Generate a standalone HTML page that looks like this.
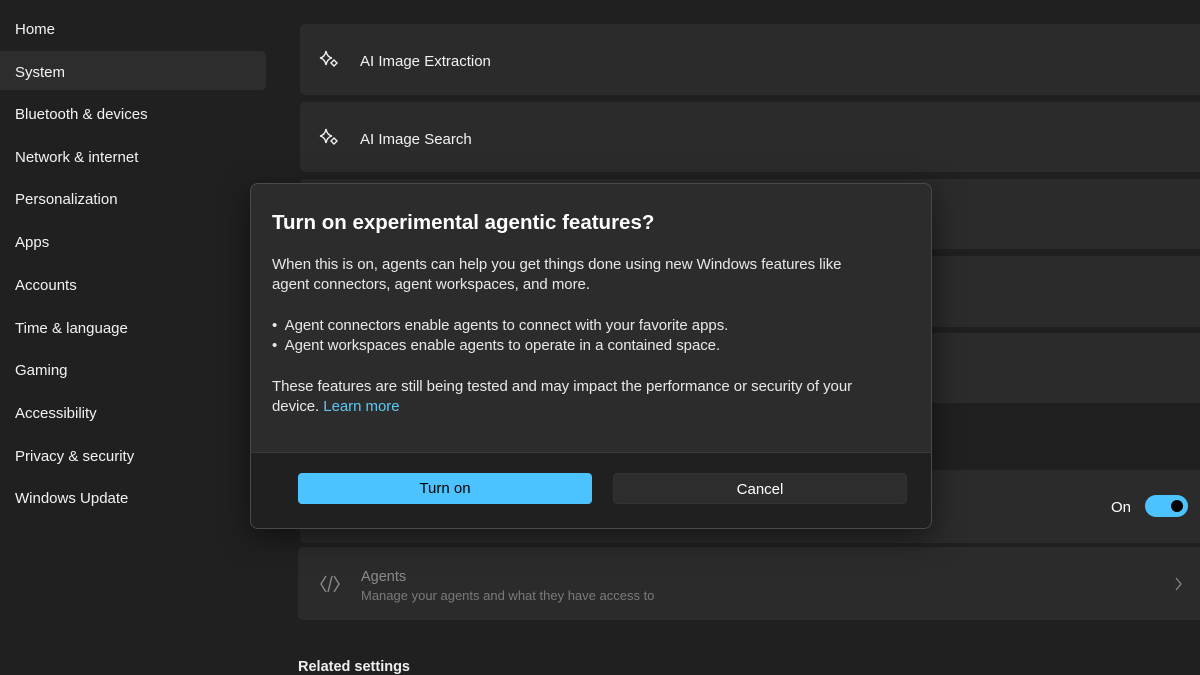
<!DOCTYPE html>
<html><head><style>
*{margin:0;padding:0;box-sizing:border-box}
body{width:1200px;height:675px;background:#202020;font-family:"Liberation Sans",sans-serif;color:#fff;position:relative;overflow:hidden}
.nav{position:absolute;left:15px;font-size:15px;color:#f2f2f2}
.sel{position:absolute;left:0;top:51px;width:266px;height:39px;background:#2d2d2d;border-radius:0 5px 5px 0}
.card{position:absolute;left:300px;width:900px;background:#2b2b2b;border-radius:5px 0 0 5px}
.ct{position:absolute;left:60px;font-size:15px;color:#f2f2f2}
.dlg{position:absolute;left:250px;top:183px;width:682px;height:346px;background:#2c2c2c;border:1px solid #4a4a4a;border-radius:8px;overflow:hidden;box-shadow:0 8px 30px rgba(0,0,0,.5)}
.foot{position:absolute;left:0;top:268px;width:100%;height:78px;background:#202020;border-top:1px solid #3a3a3a}
.p{position:absolute;left:21px;font-size:15px;color:#e8e8e8;line-height:20px;letter-spacing:-0.05px}
.btn{position:absolute;top:20px;height:31px;width:294px;border-radius:4px;font-size:15px;text-align:center;line-height:31px}
</style></head><body>
<div class="sel"></div>
<div class="nav" style="top:21px">Home</div>
<div class="nav" style="top:64px">System</div>
<div class="nav" style="top:106px">Bluetooth &amp; devices</div>
<div class="nav" style="top:149px">Network &amp; internet</div>
<div class="nav" style="top:191px">Personalization</div>
<div class="nav" style="top:234px">Apps</div>
<div class="nav" style="top:277px">Accounts</div>
<div class="nav" style="top:320px">Time &amp; language</div>
<div class="nav" style="top:362px">Gaming</div>
<div class="nav" style="top:405px">Accessibility</div>
<div class="nav" style="top:448px">Privacy &amp; security</div>
<div class="nav" style="top:490px">Windows Update</div>

<div class="card" style="top:24px;height:71px">
<svg style="position:absolute;left:19px;top:26px" width="22" height="20" viewBox="0 0 22 20" fill="none" stroke="#eee" stroke-width="1.4"><path d="M7 1 Q8 7 13 8 Q8 9 7 15 Q6 9 1 8 Q6 7 7 1Z"/><path d="M15 10 L18 13 L15 16 L12 13Z"/></svg>
<div class="ct" style="top:29px">AI Image Extraction</div></div>
<div class="card" style="top:102px;height:70px">
<svg style="position:absolute;left:19px;top:26px" width="22" height="20" viewBox="0 0 22 20" fill="none" stroke="#eee" stroke-width="1.4"><path d="M7 1 Q8 7 13 8 Q8 9 7 15 Q6 9 1 8 Q6 7 7 1Z"/><path d="M15 10 L18 13 L15 16 L12 13Z"/></svg>
<div class="ct" style="top:29px">AI Image Search</div></div>
<div class="card" style="top:179px;height:70px"></div>
<div class="card" style="top:256px;height:71px"></div>
<div class="card" style="top:333px;height:70px"></div>
<div class="card" style="top:470px;height:73px">
<div style="position:absolute;left:811px;top:29px;font-size:15px">On</div>
<div style="position:absolute;left:845px;top:25px;width:43px;height:22px;border-radius:11px;background:#4cc2ff"><div style="position:absolute;right:5px;top:5px;width:12px;height:12px;border-radius:50%;background:#000"></div></div></div>
<div class="card" style="top:547px;height:73px;left:298px;width:902px">
<svg style="position:absolute;left:20px;top:27px" width="24" height="20" viewBox="0 0 24 20" fill="none" stroke="#888" stroke-width="1.4"><path d="M8 2 L3 10 L8 18"/><path d="M16 2 L21 10 L16 18"/><path d="M14 2 L10 18"/></svg>
<div style="position:absolute;left:63px;top:22px;font-size:14.5px;color:#8a8a8a">Agents</div>
<div style="position:absolute;left:63px;top:41px;font-size:13px;color:#7a7a7a">Manage your agents and what they have access to</div>
<svg style="position:absolute;left:875px;top:30px" width="10" height="14" viewBox="0 0 10 14" fill="none" stroke="#888" stroke-width="1.3"><path d="M3 1 L8 7 L3 13"/></svg></div>
<div style="position:absolute;left:298px;top:659px;font-size:14.5px;font-weight:bold;color:#eee">Related settings</div>

<div class="dlg">
<div style="position:absolute;left:21px;top:27px;font-size:20.5px;font-weight:bold;color:#fff">Turn on experimental agentic features?</div>
<div class="p" style="top:71px">When this is on, agents can help you get things done using new Windows features like<br>agent connectors, agent workspaces, and more.</div>
<div class="p" style="top:132px">•&nbsp; Agent connectors enable agents to connect with your favorite apps.<br>•&nbsp; Agent workspaces enable agents to operate in a contained space.</div>
<div class="p" style="top:193px">These features are still being tested and may impact the performance or security of your<br>device. <span style="color:#5cc8f5">Learn more</span></div>
<div class="foot">
<div class="btn" style="left:47px;background:#4cc2ff;color:#000">Turn on</div>
<div class="btn" style="left:362px;background:#2d2d2d;border:1px solid #333;color:#fff">Cancel</div>
</div></div>
</body></html>
